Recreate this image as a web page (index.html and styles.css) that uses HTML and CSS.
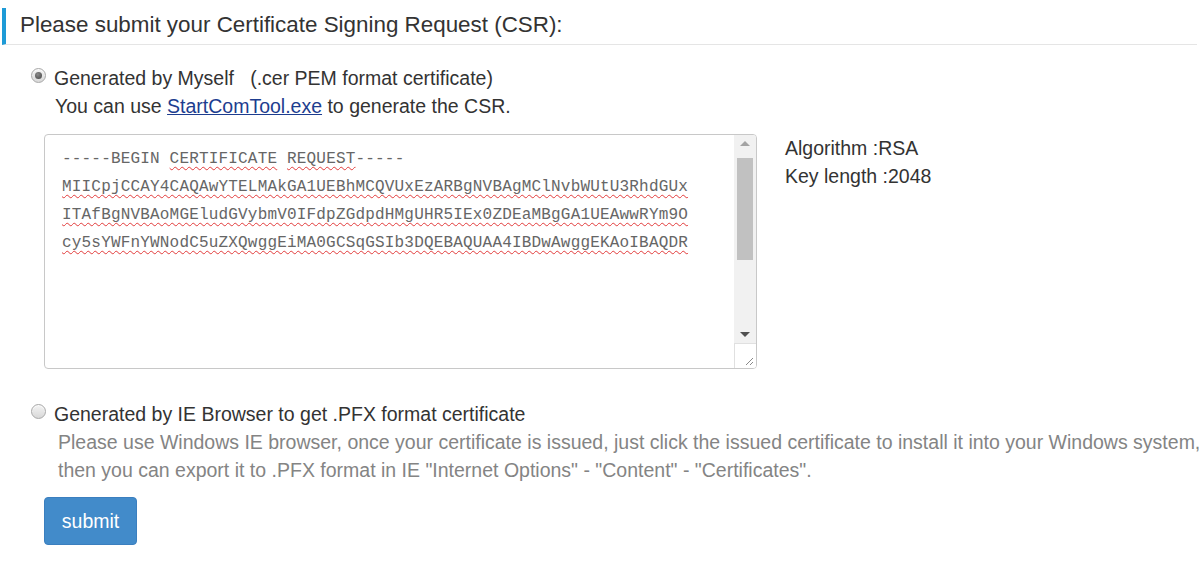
FILE: index.html
```html
<!DOCTYPE html>
<html lang="en">
<head>
    <meta charset="UTF-8">
    <meta name="viewport" content="width=device-width, initial-scale=1.0">
    <title>Submit CSR</title>
    <link rel="stylesheet" href="styles.css">
</head>
<body>
    <div class="page">
        <h3 class="section-title">Please submit your Certificate Signing Request (CSR):</h3>

        <form class="csr-form" onsubmit="return false;">
            <label class="option">
                <input type="radio" name="csrType" value="self" checked>
                <span>Generated by Myself &nbsp;&nbsp;(.cer PEM format certificate)</span>
            </label>
            <p class="hint">You can use <a href="#">StartComTool.exe</a> to generate the CSR.</p>

            <div class="csr-row">
                <div class="csr-box">
                    <div class="csr-text">
                        <div>-----BEGIN <span class="typo">CERTIFICATE</span> <span class="typo">REQUEST</span>-----</div>
                        <div><span class="typo">MIICpjCCAY4CAQAwYTELMAkGA1UEBhMCQVUxEzARBgNVBAgMClNvbWUtU3RhdGUx</span></div>
                        <div><span class="typo">ITAfBgNVBAoMGEludGVybmV0IFdpZGdpdHMgUHR5IEx0ZDEaMBgGA1UEAwwRYm9O</span></div>
                        <div><span class="typo">cy5sYWFnYWNodC5uZXQwggEiMA0GCSqGSIb3DQEBAQUAA4IBDwAwggEKAoIBAQDR</span></div>
                    </div>
                    <div class="scrollbar">
                        <div class="arrow arrow-up"></div>
                        <div class="track"><div class="thumb"></div></div>
                        <div class="arrow arrow-down"></div>
                        <div class="resizer">
                            <svg width="9" height="9" viewBox="0 0 9 9"><path d="M8 1 L1 8 M8 5 L5 8" stroke="#8a8a8a" stroke-width="1" fill="none"/></svg>
                        </div>
                    </div>
                </div>
                <div class="key-info">
                    <div>Algorithm :RSA</div>
                    <div>Key length :2048</div>
                </div>
            </div>

            <label class="option option-ie">
                <input type="radio" name="csrType" value="ie">
                <span>Generated by IE Browser to get .PFX format certificate</span>
            </label>
            <p class="note">
                Please use Windows IE browser, once your certificate is issued, just click the issued certificate to install it into your Windows system,<br>
                then you can export it to .PFX format in IE "Internet Options" - "Content" - "Certificates".
            </p>

            <button type="submit" class="submit-btn">submit</button>
        </form>
    </div>
</body>
</html>
```

FILE: styles.css
```css
body {
    margin: 0;
    font-family: "Liberation Sans", Arial, sans-serif;
    color: #333;
    background: #fff;
    overflow: hidden;
}

.page {
    width: 1195px;
    padding: 8px 0 0 2px;
}

.section-title {
    margin: 0;
    padding: 6px 0 8px 14px;
    font-size: 22.4px;
    font-weight: normal;
    line-height: 22px;
    border-left: 4px solid #1e9bd7;
    border-bottom: 1px solid #e5e5e5;
}

.csr-form {
    padding: 19px 0 0 28px;
    font-size: 19.5px;
    line-height: 28px;
}

.option {
    display: flex;
    align-items: center;
    gap: 8px;
}

.option input {
    appearance: none;
    -webkit-appearance: none;
    margin: -5px 0 0 1px;
    width: 15px;
    height: 15px;
    border: 1px solid #a8a8a8;
    border-radius: 50%;
    background: linear-gradient(#f4f4f4, #d8d8d8);
    box-shadow: inset 0 1px 1px rgba(255,255,255,0.8);
    display: grid;
    place-items: center;
}

.option input:checked::after {
    content: "";
    width: 7px;
    height: 7px;
    border-radius: 50%;
    background: radial-gradient(circle at 40% 35%, #8a8a8a, #444);
}

.hint {
    margin: 0 0 0 25px;
}

.hint a {
    color: #1d3d8f;
    text-decoration: underline;
}

.csr-row {
    display: flex;
    align-items: flex-start;
    gap: 28px;
    margin: 14px 0 0 14px;
}

.csr-box {
    width: 711px;
    height: 233px;
    border: 1px solid #c8c8c8;
    border-radius: 4px;
    display: flex;
    overflow: hidden;
}

.csr-text {
    flex: 1;
    padding: 10px 0 0 17px;
    font-family: "Liberation Mono", "Courier New", monospace;
    font-size: 16px;
    letter-spacing: 0.18px;
    line-height: 28px;
    color: #666;
}

.typo {
    text-decoration: underline wavy #e23b3b;
    text-decoration-thickness: 1px;
    text-underline-offset: 3px;
}

.scrollbar {
    width: 22px;
    display: flex;
    flex-direction: column;
    background: #f1f1f1;
}

.arrow {
    height: 17px;
    display: grid;
    place-items: center;
}

.arrow::after {
    content: "";
    border-left: 5px solid transparent;
    border-right: 5px solid transparent;
}

.arrow-up::after {
    border-bottom: 5px solid #a3a3a3;
}

.arrow-down::after {
    border-top: 5px solid #505050;
}

.track {
    flex: 1;
    padding: 6px 3px 0;
}

.thumb {
    height: 102px;
    background: #c1c1c1;
}

.resizer {
    height: 22px;
    background: #fff;
    border-top: 1px solid #e0e0e0;
    border-left: 1px solid #e0e0e0;
    display: flex;
    align-items: flex-end;
    justify-content: flex-end;
    padding: 0 2px 2px 0;
}

.key-info {
    line-height: 28px;
}

.option-ie {
    margin-top: 31px;
}

.note {
    margin: 0 0 0 28px;
    color: #848484;
    white-space: nowrap;
}

.submit-btn {
    margin: 13px 0 0 14px;
    width: 93px;
    height: 48px;
    background: #428bca;
    border: 1px solid #3b7fbf;
    border-radius: 4px;
    color: #fff;
    font-family: "Liberation Sans", Arial, sans-serif;
    font-size: 19.5px;
    cursor: pointer;
}
```
